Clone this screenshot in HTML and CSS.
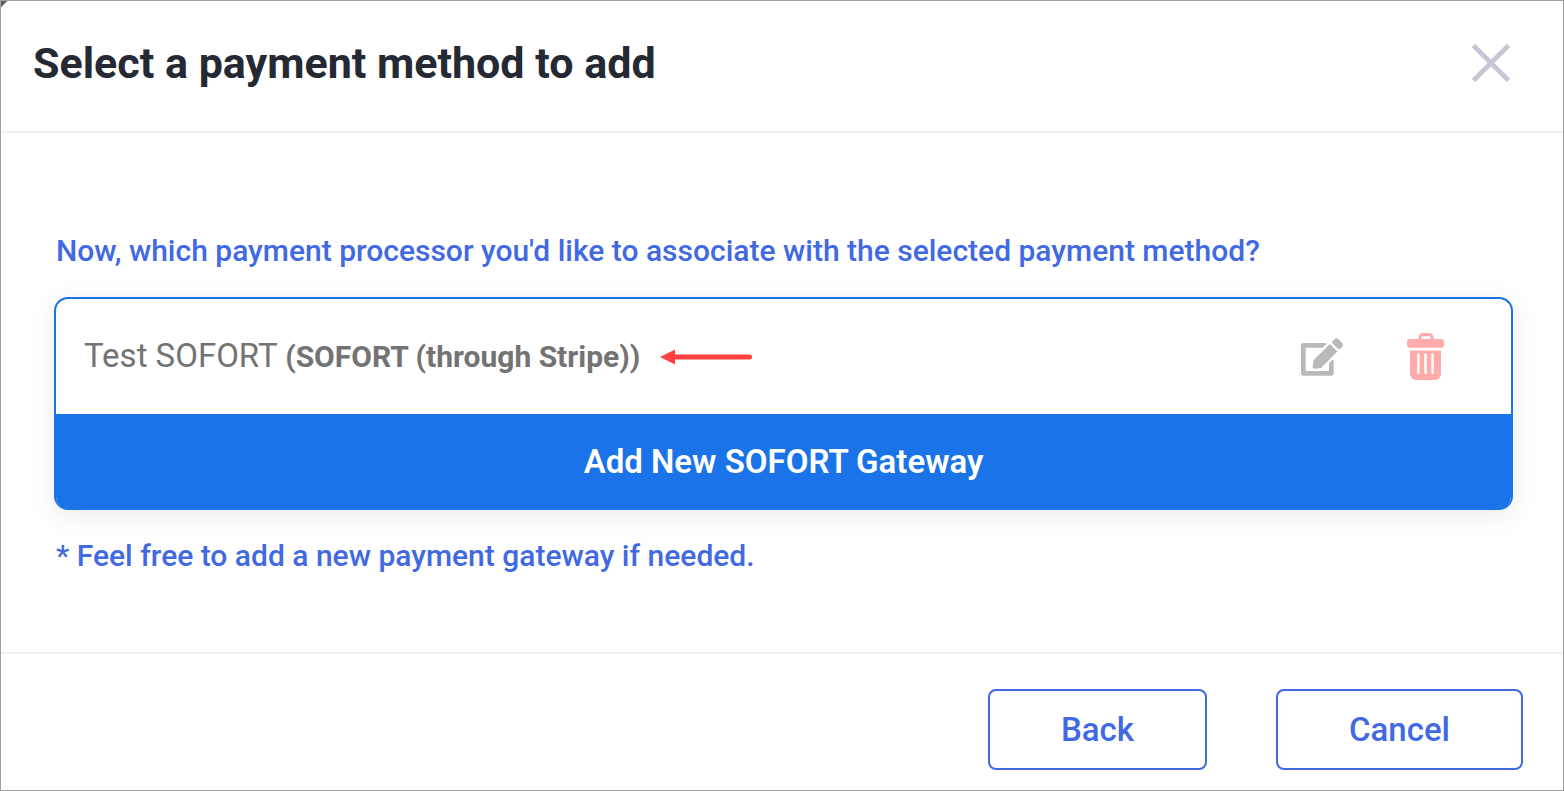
FILE: index.html
```html
<!DOCTYPE html>
<html lang="en">
<head>
<meta charset="utf-8">
<title>Select a payment method to add</title>
<link rel="stylesheet" href="styles.css">
</head>
<body>
<section class="dialog" role="dialog" aria-labelledby="dialog-title">
  <header class="dialog-header">
    <h1 class="dialog-title" id="dialog-title">Select a payment method to add</h1>
    <button class="icon-button" type="button" aria-label="Close">
      <svg class="icon-close" viewBox="0 0 38 38" aria-hidden="true"><path d="M1.500 1.500L36.500 36.500M36.500 1.500L1.500 36.500" fill="none" stroke="currentColor" stroke-width="4.800"/></svg>
    </button>
  </header>
  <main class="dialog-body">
    <p class="hint">Now, which payment processor you'd like to associate with the selected payment method?</p>
    <div class="gateway-card">
      <div class="gateway-row">
        <p class="gateway-name">Test SOFORT <strong class="gateway-type">(SOFORT (through Stripe))</strong></p>
        <svg class="pointer" viewBox="0 0 92 16" aria-hidden="true"><path d="M12 8H89.5" fill="none" stroke="currentColor" stroke-width="5" stroke-linecap="round"/><path d="M0 8L15 0.5V15.5Z" fill="currentColor"/></svg>
        <div class="gateway-actions">
          <button class="icon-button edit" type="button" aria-label="Edit gateway">
            <svg class="icon-edit" viewBox="0 0 576 512" aria-hidden="true"><path fill="currentColor" d="M402.600 83.200l90.200 90.200c3.800 3.800 3.800 10 0 13.800L274.400 405.600l-92.800 10.300c-12.400 1.400-22.900-9.100-21.500-21.500l10.300-92.800L388.800 83.200c3.800-3.800 10-3.800 13.800 0zm162-22.900l-48.800-48.800c-15.200-15.200-39.900-15.200-55.200 0l-35.400 35.400c-3.800 3.800-3.800 10 0 13.800l90.200 90.200c3.800 3.800 10 3.800 13.800 0l35.400-35.400c15.200-15.300 15.200-40 0-55.200zM384 346.200V448H64V128h229.800c3.200 0 6.200-1.300 8.500-3.500l40-40c7.600-7.600 2.200-20.500-8.500-20.500H30C13 64 0 77 0 94v388c0 17 13 30 30 30h388c17 0 30-13 30-30V306.200c0-10.700-12.900-16-20.500-8.500l-40 40c-2.200 2.300-3.500 5.300-3.500 8.500z"/></svg>
          </button>
          <button class="icon-button delete" type="button" aria-label="Delete gateway">
            <svg class="icon-trash" viewBox="0 0 38 47" aria-hidden="true">
              <path d="M13 7V4.500a2.800 2.800 0 0 1 2.800-2.800h6.400A2.800 2.800 0 0 1 25 4.500V7" fill="none" stroke="currentColor" stroke-width="3.200"/>
              <rect x="0" y="6" width="37" height="8.800" rx="3" fill="currentColor"/>
              <path fill="currentColor" fill-rule="evenodd" d="M3 17.500h31V41a6 6 0 0 1-6 6H9a6 6 0 0 1-6-6zM10.200 21.500v18.300a1.200 1.200 0 0 0 2.400 0V21.500a1.200 1.200 0 0 0-2.400 0zM17.200 21.500v18.300a1.200 1.200 0 0 0 2.600 0V21.500a1.200 1.200 0 0 0-2.600 0zM24.400 21.500v18.300a1.200 1.200 0 0 0 2.400 0V21.500a1.200 1.200 0 0 0-2.400 0z"/>
            </svg>
          </button>
        </div>
      </div>
      <button class="add-button" type="button">Add New SOFORT Gateway</button>
    </div>
    <p class="hint">* Feel free to add a new payment gateway if needed.</p>
  </main>
  <footer class="dialog-footer">
    <button class="outline-button" type="button">Back</button>
    <button class="outline-button" type="button">Cancel</button>
  </footer>
</section>
</body>
</html>
```

FILE: styles.css
```css
* {
  box-sizing: border-box;
}

body {
  margin: 0;
  font-family: Roboto, "Liberation Sans", sans-serif;
}

button {
  margin: 0;
  font-family: inherit;
  cursor: pointer;
}

p,
h1 {
  margin: 0;
}

.dialog {
  display: flex;
  flex-direction: column;
  min-height: 100vh;
  border: 1px solid #a0a0a0;
  background: linear-gradient(135deg, #5a5c66 4px, #fff 5px);
}

.dialog-header {
  display: flex;
  align-items: center;
  justify-content: space-between;
  padding: 29px 53px 35px 32px;
  border-bottom: 2px solid #efefef;
}

.dialog-title {
  color: #242933;
  font-size: 43px;
  font-weight: 700;
  line-height: 66px;
}

.icon-button {
  display: flex;
  padding: 0;
  border: 0;
  background: none;
  color: #c5c7d4;
}

.icon-close {
  width: 38px;
  height: 38px;
}

.dialog-body {
  display: flex;
  flex: 1;
  flex-direction: column;
  justify-content: center;
  gap: 22px;
  padding: 22px 50px 0 53px;
}

.hint {
  padding: 0 2px;
  color: #4169e1;
  font-size: 30px;
  font-weight: 500;
  line-height: 48px;
}

.gateway-card {
  overflow: hidden;
  border: 2px solid #1a73e8;
  border-bottom: 0;
  border-radius: 14px;
  box-shadow: 0 6px 28px rgba(0, 0, 0, 0.08);
}

.gateway-row {
  display: flex;
  align-items: center;
  padding: 32px 66px 32px 28px;
}

.gateway-name {
  color: #737373;
  font-size: 33px;
  line-height: 50px;
}

.gateway-type {
  font-size: 30px;
  font-weight: 700;
}

.pointer {
  width: 92px;
  height: 16px;
  margin-left: 20px;
  color: #ff4040;
}

.gateway-actions {
  display: flex;
  align-items: center;
  gap: 64px;
  margin-left: auto;
}

.edit {
  color: #b9b9b9;
}

.delete {
  color: #ffabab;
}

.icon-edit {
  width: 42px;
  height: 38px;
}

.icon-trash {
  width: 38px;
  height: 47px;
}

.add-button {
  display: block;
  width: 100%;
  padding: 24px;
  border: 0;
  background: #1a73e8;
  color: #fff;
  font-size: 33px;
  font-weight: 600;
  line-height: 48px;
}

.dialog-footer {
  display: flex;
  justify-content: flex-end;
  gap: 69px;
  padding: 35px 40px 20px;
  border-top: 2px solid #efefef;
}

.outline-button {
  padding: 14px 71px;
  border: 2px solid #4169e1;
  border-radius: 8px;
  background: #fff;
  color: #4169e1;
  font-size: 33px;
  font-weight: 500;
  line-height: 49px;
}
```
